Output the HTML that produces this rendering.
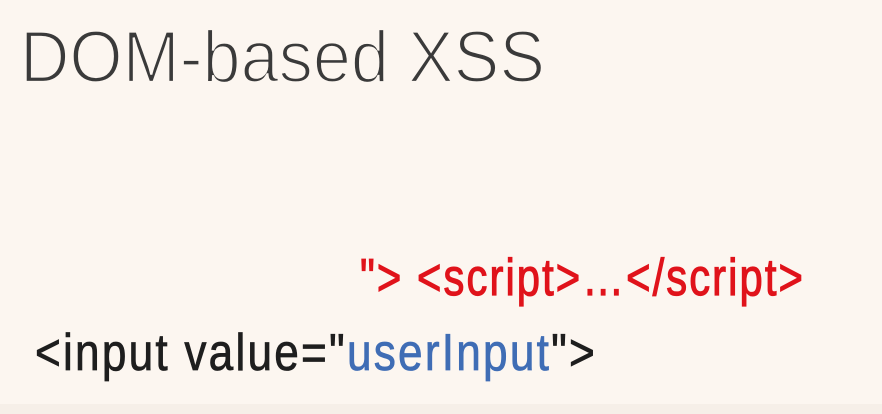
<!DOCTYPE html>
<html><head><meta charset="utf-8"><style>
html,body{margin:0;padding:0;background:#fcf6f0;width:882px;height:414px;overflow:hidden}
</style></head><body>
<svg width="882" height="414" xmlns="http://www.w3.org/2000/svg" style="display:block">
<rect width="882" height="414" fill="#fcf6f0"/>
<rect y="404" width="882" height="10" fill="#f6efe8"/>
<g transform="translate(20,82) scale(1,1.05)">
<text x="0" y="0" font-family="Liberation Sans, sans-serif" font-size="70" fill="#3a3a3a" stroke="#fcf6f0" stroke-width="2.2" textLength="525" lengthAdjust="spacingAndGlyphs">DOM-based XSS</text>
</g>
<g transform="translate(360,295) scale(1,1.3)">
<text x="0" y="0" font-family="Liberation Sans, sans-serif" font-size="40" fill="#e0131b" stroke="#e0131b" stroke-width="0.9" textLength="445" lengthAdjust="spacingAndGlyphs" letter-spacing="2">"&gt; &lt;script&gt;…&lt;/script&gt;</text>
</g>
<g transform="translate(35,370) scale(1,1.3)">
<text x="0" y="0" font-family="Liberation Sans, sans-serif" font-size="40" fill="#1e1e1e" stroke="#1e1e1e" stroke-width="0.6" textLength="562" lengthAdjust="spacingAndGlyphs" letter-spacing="2">&lt;input value="<tspan fill="#3f6db5" stroke="#3f6db5">userInput</tspan>"&gt;</text>
</g>
</svg>
</body></html>
